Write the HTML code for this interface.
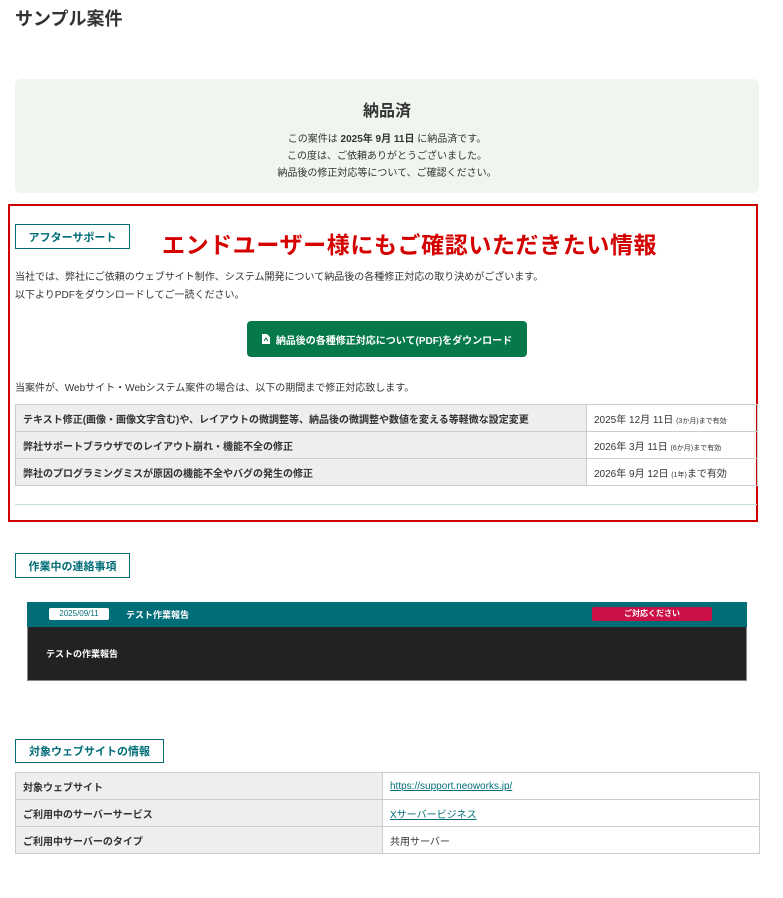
<!DOCTYPE html>
<html><head><meta charset="utf-8"><style>
*{margin:0;padding:0;box-sizing:border-box}
body{width:783px;height:898px;background:#fff;position:relative;font-family:"Liberation Sans","Noto Sans CJK JP",sans-serif;color:#333;overflow:hidden}
.a{position:absolute;white-space:nowrap}
.lbl{position:absolute;border:1px solid #006d77;color:#006d77;font-weight:bold;font-size:11px;display:flex;align-items:center;justify-content:center}
table{position:absolute;border-collapse:collapse;font-size:10px}
td{border:1px solid #c8cfd3;height:27px;padding:0 7px;vertical-align:middle}
td.h{background:#eee;font-weight:bold}
a{color:#006d77;text-decoration:underline}
</style></head><body>
<div class="a" style="left:15px;top:5px;font-size:18px;font-weight:bold;color:#333">サンプル案件</div>

<div class="a" style="left:15px;top:79px;width:744px;height:114px;background:#eef6ef;border-radius:6px;text-align:center">
<div style="margin-top:18px;font-size:16px;font-weight:bold">納品済</div>
<div style="margin-top:10px;font-size:10px;line-height:17px">この案件は <b>2025年 9月 11日</b> に納品済です。<br>この度は、ご依頼ありがとうございました。<br>納品後の修正対応等について、ご確認ください。</div>
</div>

<div class="a" style="left:8px;top:204px;width:750px;height:318px;border:2px solid #d00000"></div>
<div class="lbl" style="left:15px;top:224px;width:115px;height:25px">アフターサポート</div>
<div class="a" style="left:162px;top:226px;font-size:23px;font-weight:bold;color:#d40000;letter-spacing:0.6px">エンドユーザー様にもご確認いただきたい情報</div>
<div class="a" style="left:15px;top:269px;font-size:10px;line-height:18px">当社では、弊社にご依頼のウェブサイト制作、システム開発について納品後の各種修正対応の取り決めがございます。<br>以下よりPDFをダウンロードしてご一読ください。</div>
<div class="a" style="left:247px;top:321px;width:280px;height:36px;background:#06794a;border-radius:4px;color:#fff;font-size:10px;font-weight:bold;display:flex;align-items:center;justify-content:center">
<svg width="8" height="10" viewBox="0 0 8 10" style="margin-right:6px"><path d="M0 0h5l3 3v7H0z" fill="#fff"/><path d="M2 7l2-3 2 3" stroke="#06794a" fill="none"/></svg>納品後の各種修正対応について(PDF)をダウンロード</div>
<div class="a" style="left:15px;top:379px;font-size:10px">当案件が、Webサイト・Webシステム案件の場合は、以下の期間まで修正対応致します。</div>
<table style="left:15px;top:404px;width:743px">
<tr><td class="h" style="width:571px">テキスト修正(画像・画像文字含む)や、レイアウトの微調整等、納品後の微調整や数値を変える等軽微な設定変更</td><td>2025年 12月 11日 <span style="font-size:7px">(3か月)まで有効</span></td></tr>
<tr><td class="h">弊社サポートブラウザでのレイアウト崩れ・機能不全の修正</td><td>2026年 3月 11日 <span style="font-size:7px">(6か月)まで有効</span></td></tr>
<tr><td class="h">弊社のプログラミングミスが原因の機能不全やバグの発生の修正</td><td>2026年 9月 12日 <span style="font-size:7px">(1年)</span>まで有効</td></tr>
</table>
<div class="a" style="left:15px;top:504px;width:742px;height:1px;background:#c5dde0"></div>

<div class="lbl" style="left:15px;top:553px;width:115px;height:25px">作業中の連絡事項</div>
<div class="a" style="left:27px;top:602px;width:720px;height:79px;background:#222;border:1px solid #888"></div>
<div class="a" style="left:27px;top:602px;width:720px;height:25px;background:#006e78"></div>
<div class="a" style="left:49px;top:608px;width:60px;height:12px;background:#fff;border-radius:2px;color:#006e78;font-size:8px;text-align:center;line-height:12px">2025/09/11</div>
<div class="a" style="left:126px;top:608px;color:#fff;font-size:9px;font-weight:bold">テスト作業報告</div>
<div class="a" style="left:592px;top:607px;width:120px;height:14px;background:#cc1147;border-radius:2px;color:#fff;font-size:8px;font-weight:bold;text-align:center;line-height:14px">ご対応ください</div>
<div class="a" style="left:46px;top:647px;color:#fff;font-size:9px;font-weight:bold">テストの作業報告</div>

<div class="lbl" style="left:15px;top:739px;width:149px;height:24px">対象ウェブサイトの情報</div>
<table style="left:15px;top:772px;width:745px">
<tr><td class="h" style="width:367px">対象ウェブサイト</td><td><a>https://support.neoworks.jp/</a></td></tr>
<tr><td class="h">ご利用中のサーバーサービス</td><td><a>Xサーバービジネス</a></td></tr>
<tr><td class="h">ご利用中サーバーのタイプ</td><td>共用サーバー</td></tr>
</table>
</body></html>
